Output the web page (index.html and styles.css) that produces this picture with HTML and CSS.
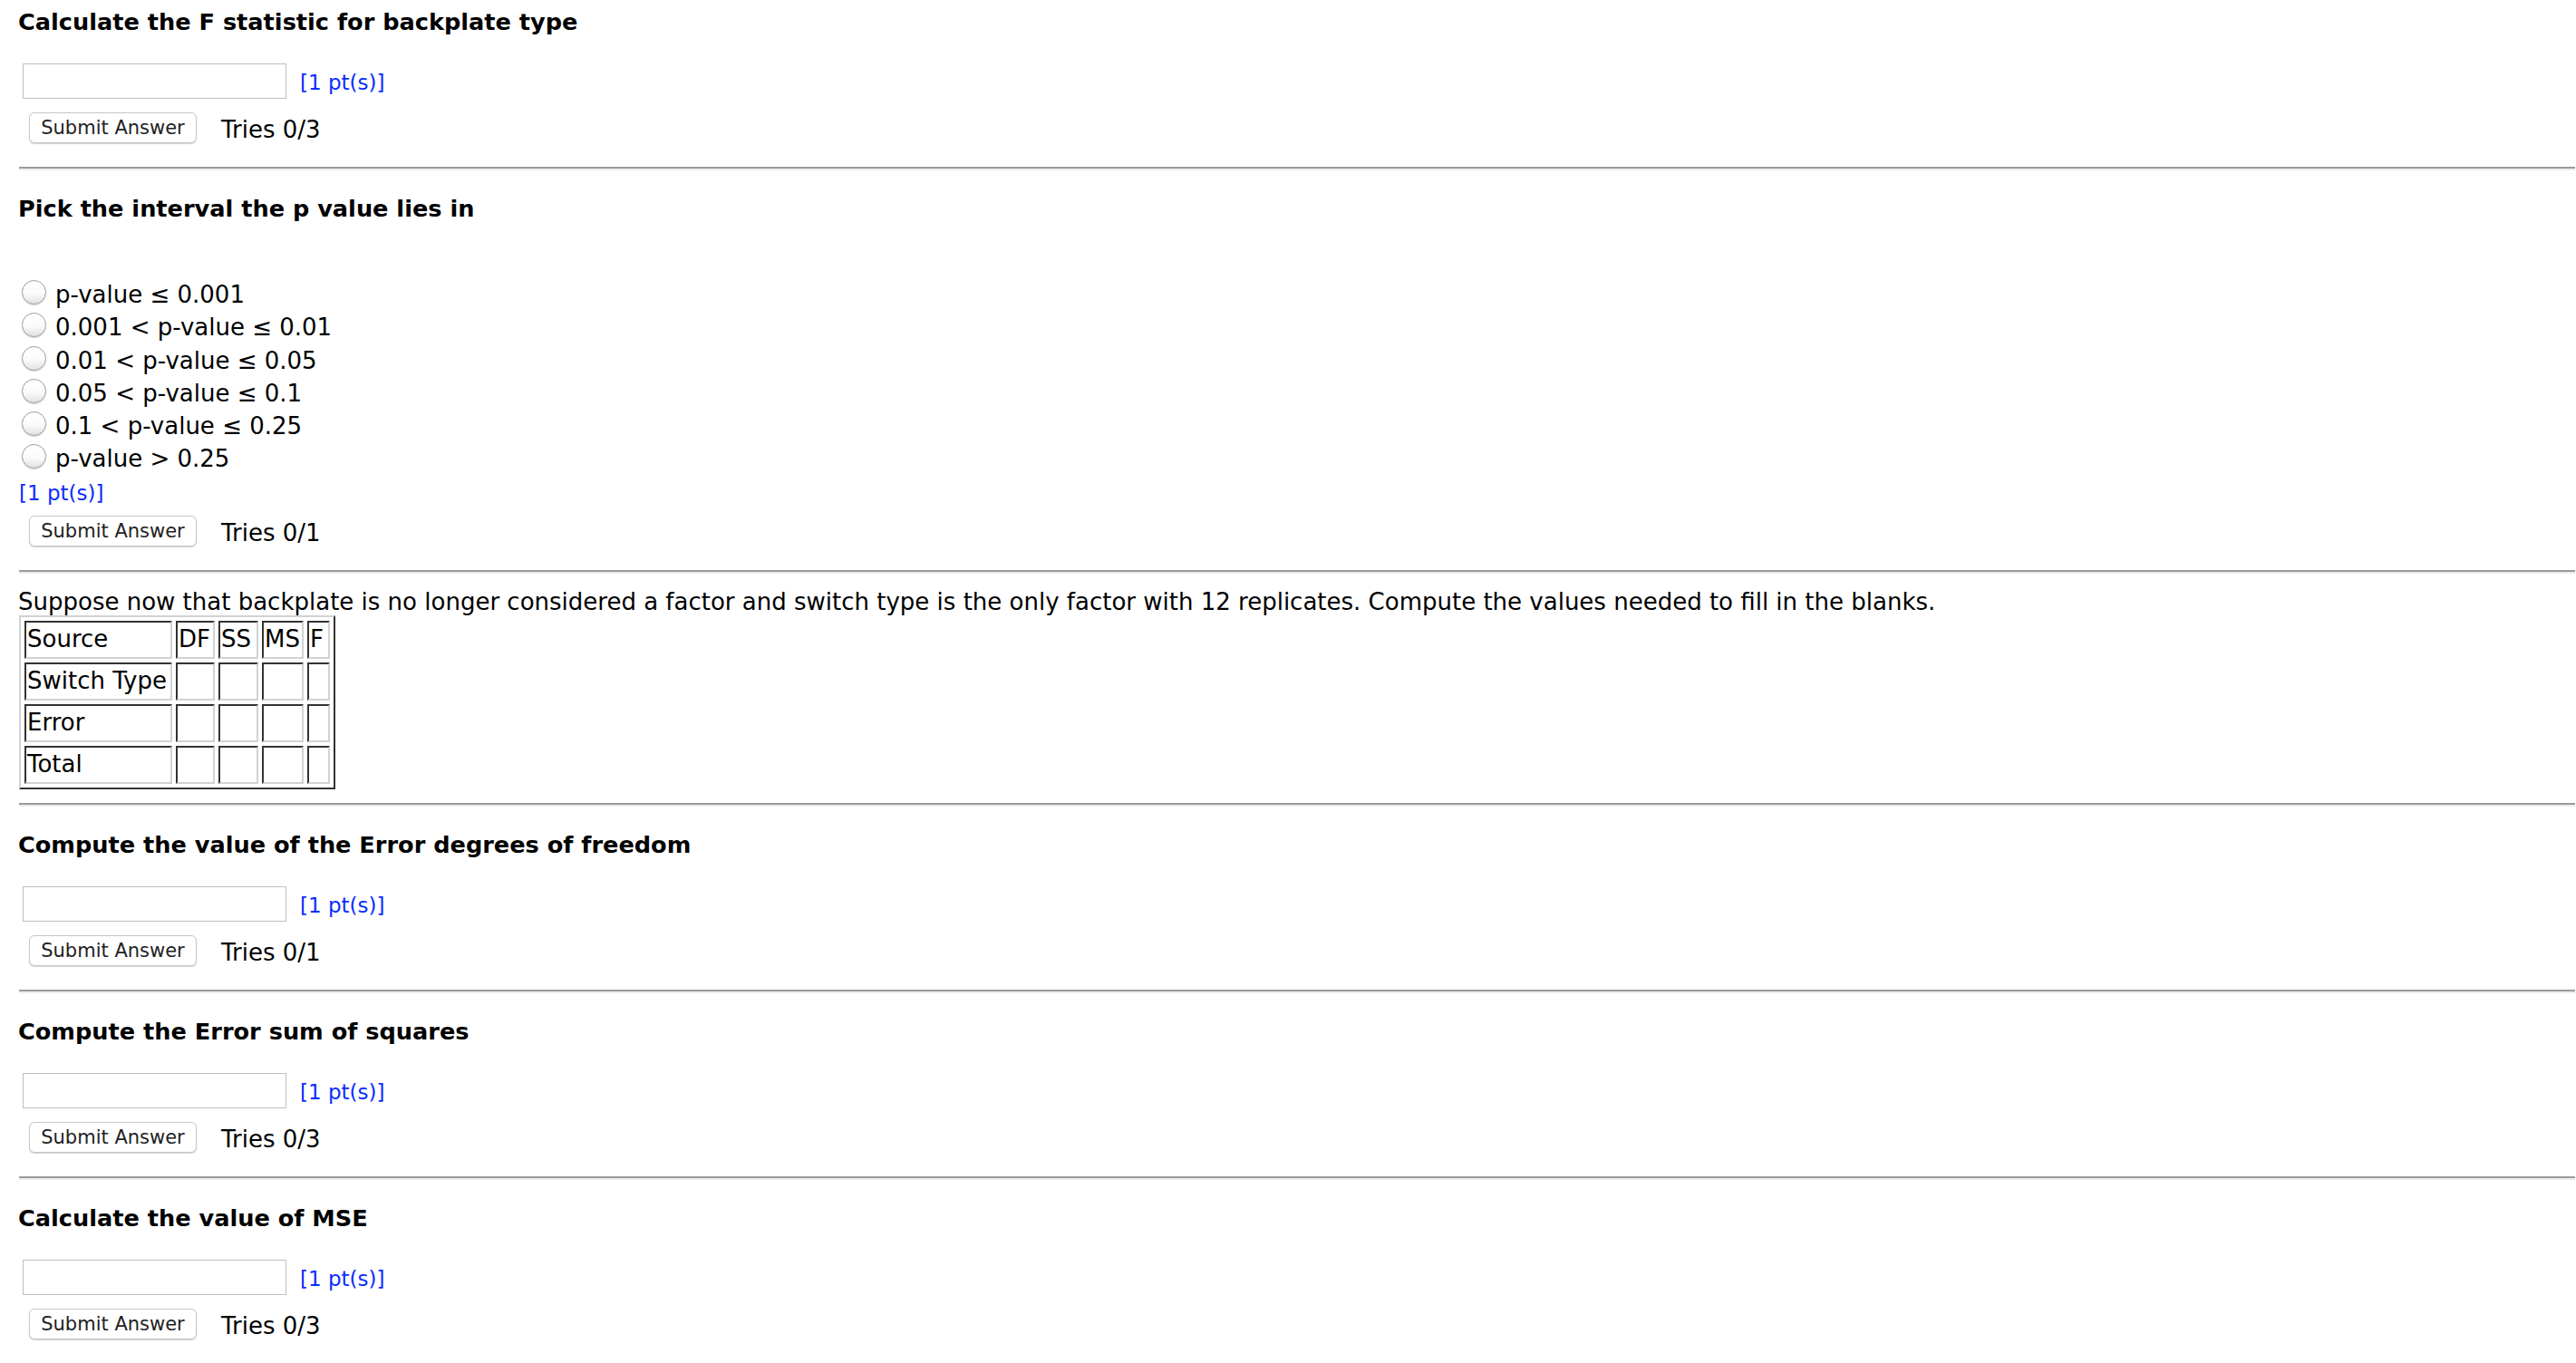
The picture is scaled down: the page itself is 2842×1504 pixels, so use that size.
FILE: index.html
```html
<!DOCTYPE html>
<html lang="en">
<head>
<meta charset="utf-8">
<title>ANOVA questions</title>
<link rel="stylesheet" href="styles.css">
</head>
<body>
<div class="page">

  <section class="question">
    <h3 class="q-title q-title-first">Calculate the F statistic for backplate type</h3>
    <div class="answer-row"><input class="answer" type="text"><span class="pts">[1 pt(s)]</span></div>
    <div class="submit-row"><button class="submit" type="button">Submit Answer</button><span class="tries">Tries 0/3</span></div>
  </section>
  <hr class="sep">

  <section class="question">
    <h3 class="q-title">Pick the interval the p value lies in</h3>
    <div class="options">
      <label class="opt"><span class="radio"></span><span class="opt-text">p-value ≤ 0.001</span></label>
      <label class="opt"><span class="radio"></span><span class="opt-text">0.001 &lt; p-value ≤ 0.01</span></label>
      <label class="opt"><span class="radio"></span><span class="opt-text">0.01 &lt; p-value ≤ 0.05</span></label>
      <label class="opt"><span class="radio"></span><span class="opt-text">0.05 &lt; p-value ≤ 0.1</span></label>
      <label class="opt"><span class="radio"></span><span class="opt-text">0.1 &lt; p-value ≤ 0.25</span></label>
      <label class="opt"><span class="radio"></span><span class="opt-text">p-value &gt; 0.25</span></label>
    </div>
    <div class="pts pts-block">[1 pt(s)]</div>
    <div class="submit-row submit-row-tight"><button class="submit" type="button">Submit Answer</button><span class="tries">Tries 0/1</span></div>
  </section>
  <hr class="sep">

  <section class="info">
    <p class="info-text">Suppose now that backplate is no longer considered a factor and switch type is the only factor with 12 replicates. Compute the values needed to fill in the blanks.</p>
    <table class="anova">
      <tr><td class="c-src">Source</td><td class="c-df">DF</td><td class="c-ss">SS</td><td class="c-ms">MS</td><td class="c-f">F</td></tr>
      <tr><td class="c-src">Switch Type</td><td class="c-df"></td><td class="c-ss"></td><td class="c-ms"></td><td class="c-f"></td></tr>
      <tr><td class="c-src">Error</td><td class="c-df"></td><td class="c-ss"></td><td class="c-ms"></td><td class="c-f"></td></tr>
      <tr><td class="c-src">Total</td><td class="c-df"></td><td class="c-ss"></td><td class="c-ms"></td><td class="c-f"></td></tr>
    </table>
  </section>
  <hr class="sep sep-after-table">

  <section class="question">
    <h3 class="q-title">Compute the value of the Error degrees of freedom</h3>
    <div class="answer-row"><input class="answer" type="text"><span class="pts">[1 pt(s)]</span></div>
    <div class="submit-row"><button class="submit" type="button">Submit Answer</button><span class="tries">Tries 0/1</span></div>
  </section>
  <hr class="sep">

  <section class="question">
    <h3 class="q-title">Compute the Error sum of squares</h3>
    <div class="answer-row"><input class="answer" type="text"><span class="pts">[1 pt(s)]</span></div>
    <div class="submit-row"><button class="submit" type="button">Submit Answer</button><span class="tries">Tries 0/3</span></div>
  </section>
  <hr class="sep">

  <section class="question">
    <h3 class="q-title">Calculate the value of MSE</h3>
    <div class="answer-row"><input class="answer" type="text"><span class="pts">[1 pt(s)]</span></div>
    <div class="submit-row"><button class="submit" type="button">Submit Answer</button><span class="tries">Tries 0/3</span></div>
  </section>
  <hr class="sep">

</div>
</body>
</html>
```
FILE: styles.css
```css
html, body {
  margin: 0;
  padding: 0;
  background: #ffffff;
}

body {
  font-family: "DejaVu Sans", Verdana, sans-serif;
  font-size: 26px;
  color: #000000;
  overflow: hidden;
}

.page {
  padding-left: 20px;
}

.question, .info {
  display: block;
}

.q-title {
  margin: 27px 0 0 0;
  font-size: 25.6px;
  font-weight: bold;
  line-height: 30px;
  white-space: nowrap;
}

.q-title-first {
  margin-top: 9px;
}

.answer-row {
  display: flex;
  align-items: flex-start;
  margin-top: 31px;
  padding-left: 5px;
}

.answer {
  box-sizing: border-box;
  width: 291px;
  height: 39px;
  margin: 0;
  padding: 0 6px;
  border: 1px solid #bfbfbf;
  border-radius: 0;
  background: #ffffff;
  font-family: "DejaVu Sans", Verdana, sans-serif;
  font-size: 22px;
  outline: none;
}

.pts {
  color: #0a2cff;
  font-size: 23px;
  line-height: 29px;
  white-space: nowrap;
}

.answer-row .pts {
  margin-left: 15px;
  margin-top: 7px;
}

.pts-block {
  display: block;
  margin-top: 8px;
  padding-left: 1px;
}

.submit-row {
  display: flex;
  align-items: flex-start;
  margin-top: 15px;
  padding-left: 12px;
}

.submit-row-tight {
  margin-top: 10px;
}

.submit {
  box-sizing: border-box;
  width: 185px;
  height: 34px;
  margin: 0;
  padding: 0;
  border: 1px solid #c6c6c6;
  border-radius: 6px;
  background: #ffffff;
  box-shadow: 0 1px 1px rgba(0, 0, 0, 0.18);
  font-family: "DejaVu Sans", Verdana, sans-serif;
  font-size: 21px;
  color: #222222;
  line-height: 32px;
  text-align: center;
  white-space: nowrap;
}

.tries {
  margin-left: 27px;
  margin-top: 5px;
  font-size: 26px;
  line-height: 29px;
  white-space: nowrap;
}

.sep {
  display: block;
  height: 0;
  margin: 26px 1px 0 1px;
  border: 0;
  border-top: 2px solid #9b9b9b;
  border-bottom: 2px solid #ececec;
}

.sep-after-table {
  margin-top: 15px;
}

.options {
  margin-top: 59px;
}

.opt {
  display: flex;
  align-items: flex-start;
  height: 36.3px;
}

.radio {
  box-sizing: border-box;
  display: block;
  flex: none;
  width: 27px;
  height: 27px;
  margin-left: 4px;
  margin-top: 5px;
  border: 1px solid #9c9c9c;
  border-radius: 50%;
  background: linear-gradient(#ffffff 0%, #fbfbfb 55%, #e2e2e2 100%);
  box-shadow: 0 1px 1px rgba(0, 0, 0, 0.18);
}

.opt-text {
  margin-left: 10px;
  margin-top: 7px;
  line-height: 29px;
  white-space: nowrap;
}

.info-text {
  margin: 17px 0 0 0;
  line-height: 29px;
  white-space: nowrap;
}

.anova {
  margin-left: 1px;
  border-collapse: separate;
  border-spacing: 4px;
  border-style: solid;
  border-width: 2px;
  border-color: #d2d2d2 #333333 #333333 #d2d2d2;
}

.anova td {
  box-sizing: border-box;
  height: 42px;
  padding: 0 1px;
  border-style: solid;
  border-width: 2px;
  border-color: #333333 #d2d2d2 #d2d2d2 #333333;
  line-height: 29px;
  vertical-align: middle;
  white-space: nowrap;
  font-size: 26px;
}

.anova .c-src { width: 163px; }
.anova .c-df { width: 43px; }
.anova .c-ss { width: 44px; }
.anova .c-ms { width: 46px; }
.anova .c-f { width: 25px; }
```
